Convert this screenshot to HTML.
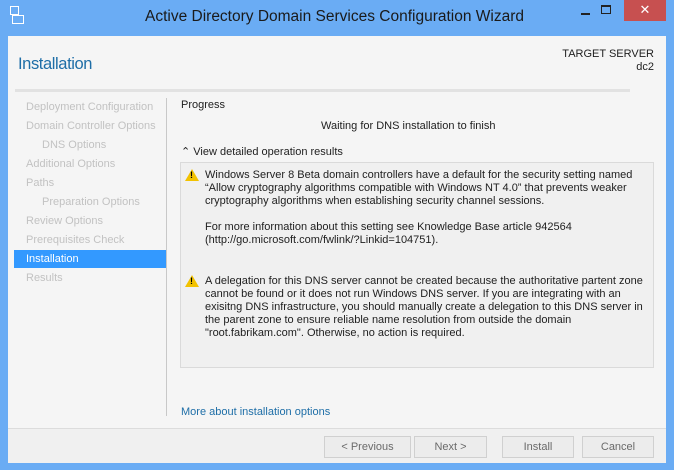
<!DOCTYPE html>
<html><head><style>
*{margin:0;padding:0;box-sizing:border-box}
body{width:674px;height:470px;background:#6aacf4;font-family:"Liberation Sans",sans-serif;font-size:11px;color:#1e1e1e;position:relative;overflow:hidden;letter-spacing:0}
.a{position:absolute;white-space:nowrap}
#client{position:absolute;left:8px;top:36px;width:658px;height:427px;background:#f5f5f5}
#footer{position:absolute;left:8px;top:428px;width:658px;height:35px;background:#f0f0f0;border-top:1px solid #dcdcdc}
.nav{position:absolute;left:26px;color:#c2c2c2}
.btn{position:absolute;top:436px;height:22px;border:1px solid #d0d0d0;background:#ececec;color:#6a6a6a;text-align:center;line-height:20px}
.warn{position:absolute;width:0;height:0;border-left:7px solid transparent;border-right:7px solid transparent;border-bottom:12px solid #f2c200}
.warn:after{content:"!";position:absolute;left:-2px;top:1px;font-size:9px;font-weight:bold;color:#000}
.t{position:absolute;left:205px;line-height:13px;white-space:nowrap}
</style></head><body>
<div class="a" style="left:10px;top:6px;width:9px;height:9px;border:1px solid #fff"></div>
<div class="a" style="left:12px;top:15px;width:12px;height:9px;border:1px solid #fff"></div>
<div class="a" style="left:145px;top:8px;font-size:15.5px;color:#1a1a1a">Active Directory Domain Services Configuration Wizard</div>
<div class="a" style="left:581px;top:13px;width:9px;height:2px;background:#222"></div>
<div class="a" style="left:601px;top:5px;width:10px;height:9px;border:1px solid #222;border-top-width:2px"></div>
<div class="a" style="left:624px;top:0;width:42px;height:21px;background:#c75050;color:#fff;text-align:center;font-size:13px;line-height:20px">✕</div>
<div id="client"></div>
<div id="footer"></div>
<div class="a" style="left:18px;top:55px;font-size:16.5px;color:#1e6ea7;letter-spacing:-0.4px">Installation</div>
<div class="a" style="right:20px;top:48px;text-align:right;line-height:13px">TARGET SERVER<br>dc2</div>
<div class="a" style="left:15px;top:89px;width:615px;height:3px;background:#e2e2e2"></div>
<div class="a" style="left:166px;top:98px;width:1px;height:318px;background:#c8c8c8"></div>
<div class="nav" style="top:101px">Deployment Configuration</div>
<div class="nav" style="top:120px">Domain Controller Options</div>
<div class="nav" style="top:139px;left:42px">DNS Options</div>
<div class="nav" style="top:158px">Additional Options</div>
<div class="nav" style="top:177px">Paths</div>
<div class="nav" style="top:196px;left:42px">Preparation Options</div>
<div class="nav" style="top:215px">Review Options</div>
<div class="nav" style="top:234px">Prerequisites Check</div>
<div class="a" style="left:14px;top:250px;width:152px;height:18px;background:#3399ff"></div>
<div class="nav" style="top:253px;color:#fff">Installation</div>
<div class="nav" style="top:272px">Results</div>
<div class="a" style="left:181px;top:99px">Progress</div>
<div class="a" style="left:321px;top:120px">Waiting for DNS installation to finish</div>
<div class="a" style="left:181px;top:145px">⌃ View detailed operation results</div>
<div class="a" style="left:180px;top:162px;width:474px;height:206px;background:#f0f0f0;border:1px solid #dadada"></div>
<div class="warn" style="left:185px;top:169px"></div>
<div class="t" style="top:169px">Windows Server 8 Beta domain controllers have a default for the security setting named<br>“Allow cryptography algorithms compatible with Windows NT 4.0” that prevents weaker<br>cryptography algorithms when establishing security channel sessions.<br><br>For more information about this setting see Knowledge Base article 942564<br>(http://go.microsoft.com/fwlink/?Linkid=104751).</div>
<div class="warn" style="left:185px;top:275px"></div>
<div class="t" style="top:275px">A delegation for this DNS server cannot be created because the authoritative partent zone<br>cannot be found or it does not run Windows DNS server. If you are integrating with an<br>exisitng DNS infrastructure, you should manually create a delegation to this DNS server in<br>the parent zone to ensure reliable name resolution from outside the domain<br>"root.fabrikam.com". Otherwise, no action is required.</div>
<div class="a" style="left:181px;top:406px;color:#1e6ea7">More about installation options</div>
<div class="btn" style="left:324px;width:87px">&lt; Previous</div>
<div class="btn" style="left:414px;width:73px">Next &gt;</div>
<div class="btn" style="left:502px;width:72px">Install</div>
<div class="btn" style="left:582px;width:72px">Cancel</div>
</body></html>
